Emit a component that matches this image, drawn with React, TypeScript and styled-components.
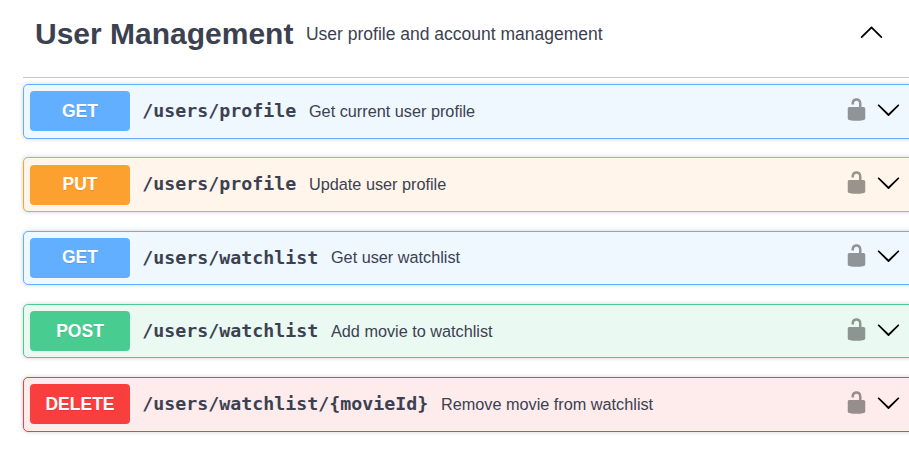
import React from "react";
import styled, { createGlobalStyle } from "styled-components";

const GlobalStyle = createGlobalStyle`
  * { box-sizing: border-box; }
  body { margin: 0; background: #fff; overflow: hidden; }
`;

const Page = styled.main`
  width: 909px;
  height: 457px;
  padding-left: 23px;
  overflow: hidden;
  color: #3b4151;
  font-family: "Liberation Sans", Arial, sans-serif;
`;

const Header = styled.header`
  display: flex;
  align-items: flex-start;
  height: 78px;
  padding: 17px 25px 0 12px;
  border-bottom: 1px solid #c4c6ca;
`;

const Title = styled.h2`
  margin: 0;
  font-size: 30px;
  line-height: 34px;
  font-weight: 700;
  white-space: nowrap;
`;

const TagText = styled.p`
  flex: 1;
  margin: 7px 0 0 12.5px;
  font-size: 17.5px;
  line-height: 20px;
`;

const Icon = styled.svg`
  display: block;
  flex: none;
  width: 25px;
  height: 25px;
`;

const Toggle = styled(Icon)`
  margin-top: 2px;
`;

const List = styled.div`
  display: flex;
  flex-direction: column;
  padding-top: 6px;
`;

const palette = {
  GET: { main: "#61affe", tint: "#eff7ff" },
  PUT: { main: "#fca130", tint: "#fff5ea" },
  POST: { main: "#49cc90", tint: "#ebf9f3" },
  DELETE: { main: "#f93e3e", tint: "#feebeb" },
};
type Method = keyof typeof palette;

const Operation = styled.section<{ $method: Method; $height: number; $gap: number; $top: number }>`
  display: flex;
  align-items: flex-start;
  height: ${(p) => p.$height}px;
  margin: 0 -10px ${(p) => p.$gap}px 0;
  padding: ${(p) => p.$top}px 17px 0 6px;
  border: 1px solid ${(p) => palette[p.$method].main};
  border-radius: 5px;
  background: ${(p) => palette[p.$method].tint};
  box-shadow: 0 0 4px rgba(0, 0, 0, 0.19);
`;

const Line = styled.div`
  display: flex;
  align-items: flex-start;
  flex: 1;
  height: 40px;
`;

const Badge = styled.span<{ $method: Method; $inset: number }>`
  flex: none;
  width: 100px;
  height: 40px;
  padding-top: ${(p) => p.$inset}px;
  border-radius: 4px;
  background: ${(p) => palette[p.$method].main};
  color: #fff;
  font-size: 17.5px;
  font-weight: 700;
  line-height: 20px;
  text-align: center;
  text-shadow: 0 1px 0 rgba(0, 0, 0, 0.1);
`;

const Path = styled.span<{ $inset: number }>`
  margin: ${(p) => p.$inset}px 0 0 12.25px;
  font-family: "DejaVu Sans Mono", monospace;
  font-size: 18.27px;
  font-weight: 700;
  line-height: 24px;
  white-space: nowrap;
`;

const Summary = styled.span<{ $inset: number }>`
  flex: 1;
  margin-top: ${(p) => p.$inset}px;
  padding-left: 12.75px;
  font-size: 16.25px;
  line-height: 20px;
  white-space: nowrap;
`;

const Actions = styled.div<{ $inset: number }>`
  display: flex;
  gap: 7.5px;
  margin-top: ${(p) => p.$inset}px;
`;

const LOCK =
  "M15.8 8H14V5.6C14 2.703 12.665 1 10 1 7.334 1 6 2.703 6 5.6V6h2v-.801C8 3.754 8.797 3 10 3c1.203 0 2 .754 2 2.199V8H4c-.553 0-1 .646-1 1.199V17c0 .549.428 1.139.951 1.307l1.197.387C5.672 18.861 6.55 19 7.1 19h5.8c.549 0 1.428-.139 1.951-.307l1.196-.387c.524-.167.953-.757.953-1.306V9.199C17 8.646 16.352 8 15.8 8z";
const DOWN =
  "M17.418 6.109c.272-.268.709-.268.979 0s.271.701 0 .969l-7.908 7.83c-.27.268-.707.268-.979 0l-7.908-7.83c-.27-.268-.27-.701 0-.969.271-.268.709-.268.979 0L10 13.25l7.418-7.141z";
const UP =
  "M17.418 14.908c.272.268.709.268.979 0s.271-.701 0-.969l-7.908-7.83c-.27-.268-.707-.268-.979 0l-7.908 7.83c-.27.268-.27.701 0 .969.271.268.709.268.979 0L10 7.767l7.418 7.141z";

interface Op {
  method: Method;
  path: string;
  summary: string;
  height: number;
  gap: number;
  top: number;
  insets: { label: number; path: number; summary: number; icons: number };
}

const operations: Op[] = [
  { method: "GET", path: "/users/profile", summary: "Get current user profile", height: 55, gap: 18, top: 6, insets: { label: 10, path: 8, summary: 10, icons: 6 } },
  { method: "PUT", path: "/users/profile", summary: "Update user profile", height: 55, gap: 19, top: 7, insets: { label: 9, path: 7, summary: 9, icons: 5 } },
  { method: "GET", path: "/users/watchlist", summary: "Get user watchlist", height: 54, gap: 19, top: 6, insets: { label: 9, path: 8, summary: 9, icons: 5 } },
  { method: "POST", path: "/users/watchlist", summary: "Add movie to watchlist", height: 54, gap: 19, top: 6, insets: { label: 10, path: 8, summary: 10, icons: 6 } },
  { method: "DELETE", path: "/users/watchlist/{movieId}", summary: "Remove movie from watchlist", height: 55, gap: 0, top: 6, insets: { label: 10, path: 8, summary: 10, icons: 6 } },
];

export default function App() {
  return (
    <>
      <GlobalStyle />
      <Page>
        <Header>
          <Title>User Management</Title>
          <TagText>User profile and account management</TagText>
          <Toggle viewBox="0 0 20 20">
            <path d={UP} />
          </Toggle>
        </Header>
        <List>
          {operations.map(({ method, path, summary, height, gap, top, insets }) => (
            <Operation key={method + path} $method={method} $height={height} $gap={gap} $top={top}>
              <Line>
                <Badge $method={method} $inset={insets.label}>{method}</Badge>
                <Path $inset={insets.path}>{path}</Path>
                <Summary $inset={insets.summary}>{summary}</Summary>
                <Actions $inset={insets.icons}>
                  <Icon viewBox="0 0 20 20">
                    <path d={LOCK} opacity="0.4" />
                  </Icon>
                  <Icon viewBox="0 0 20 20">
                    <path d={DOWN} />
                  </Icon>
                </Actions>
              </Line>
            </Operation>
          ))}
        </List>
      </Page>
    </>
  );
}
